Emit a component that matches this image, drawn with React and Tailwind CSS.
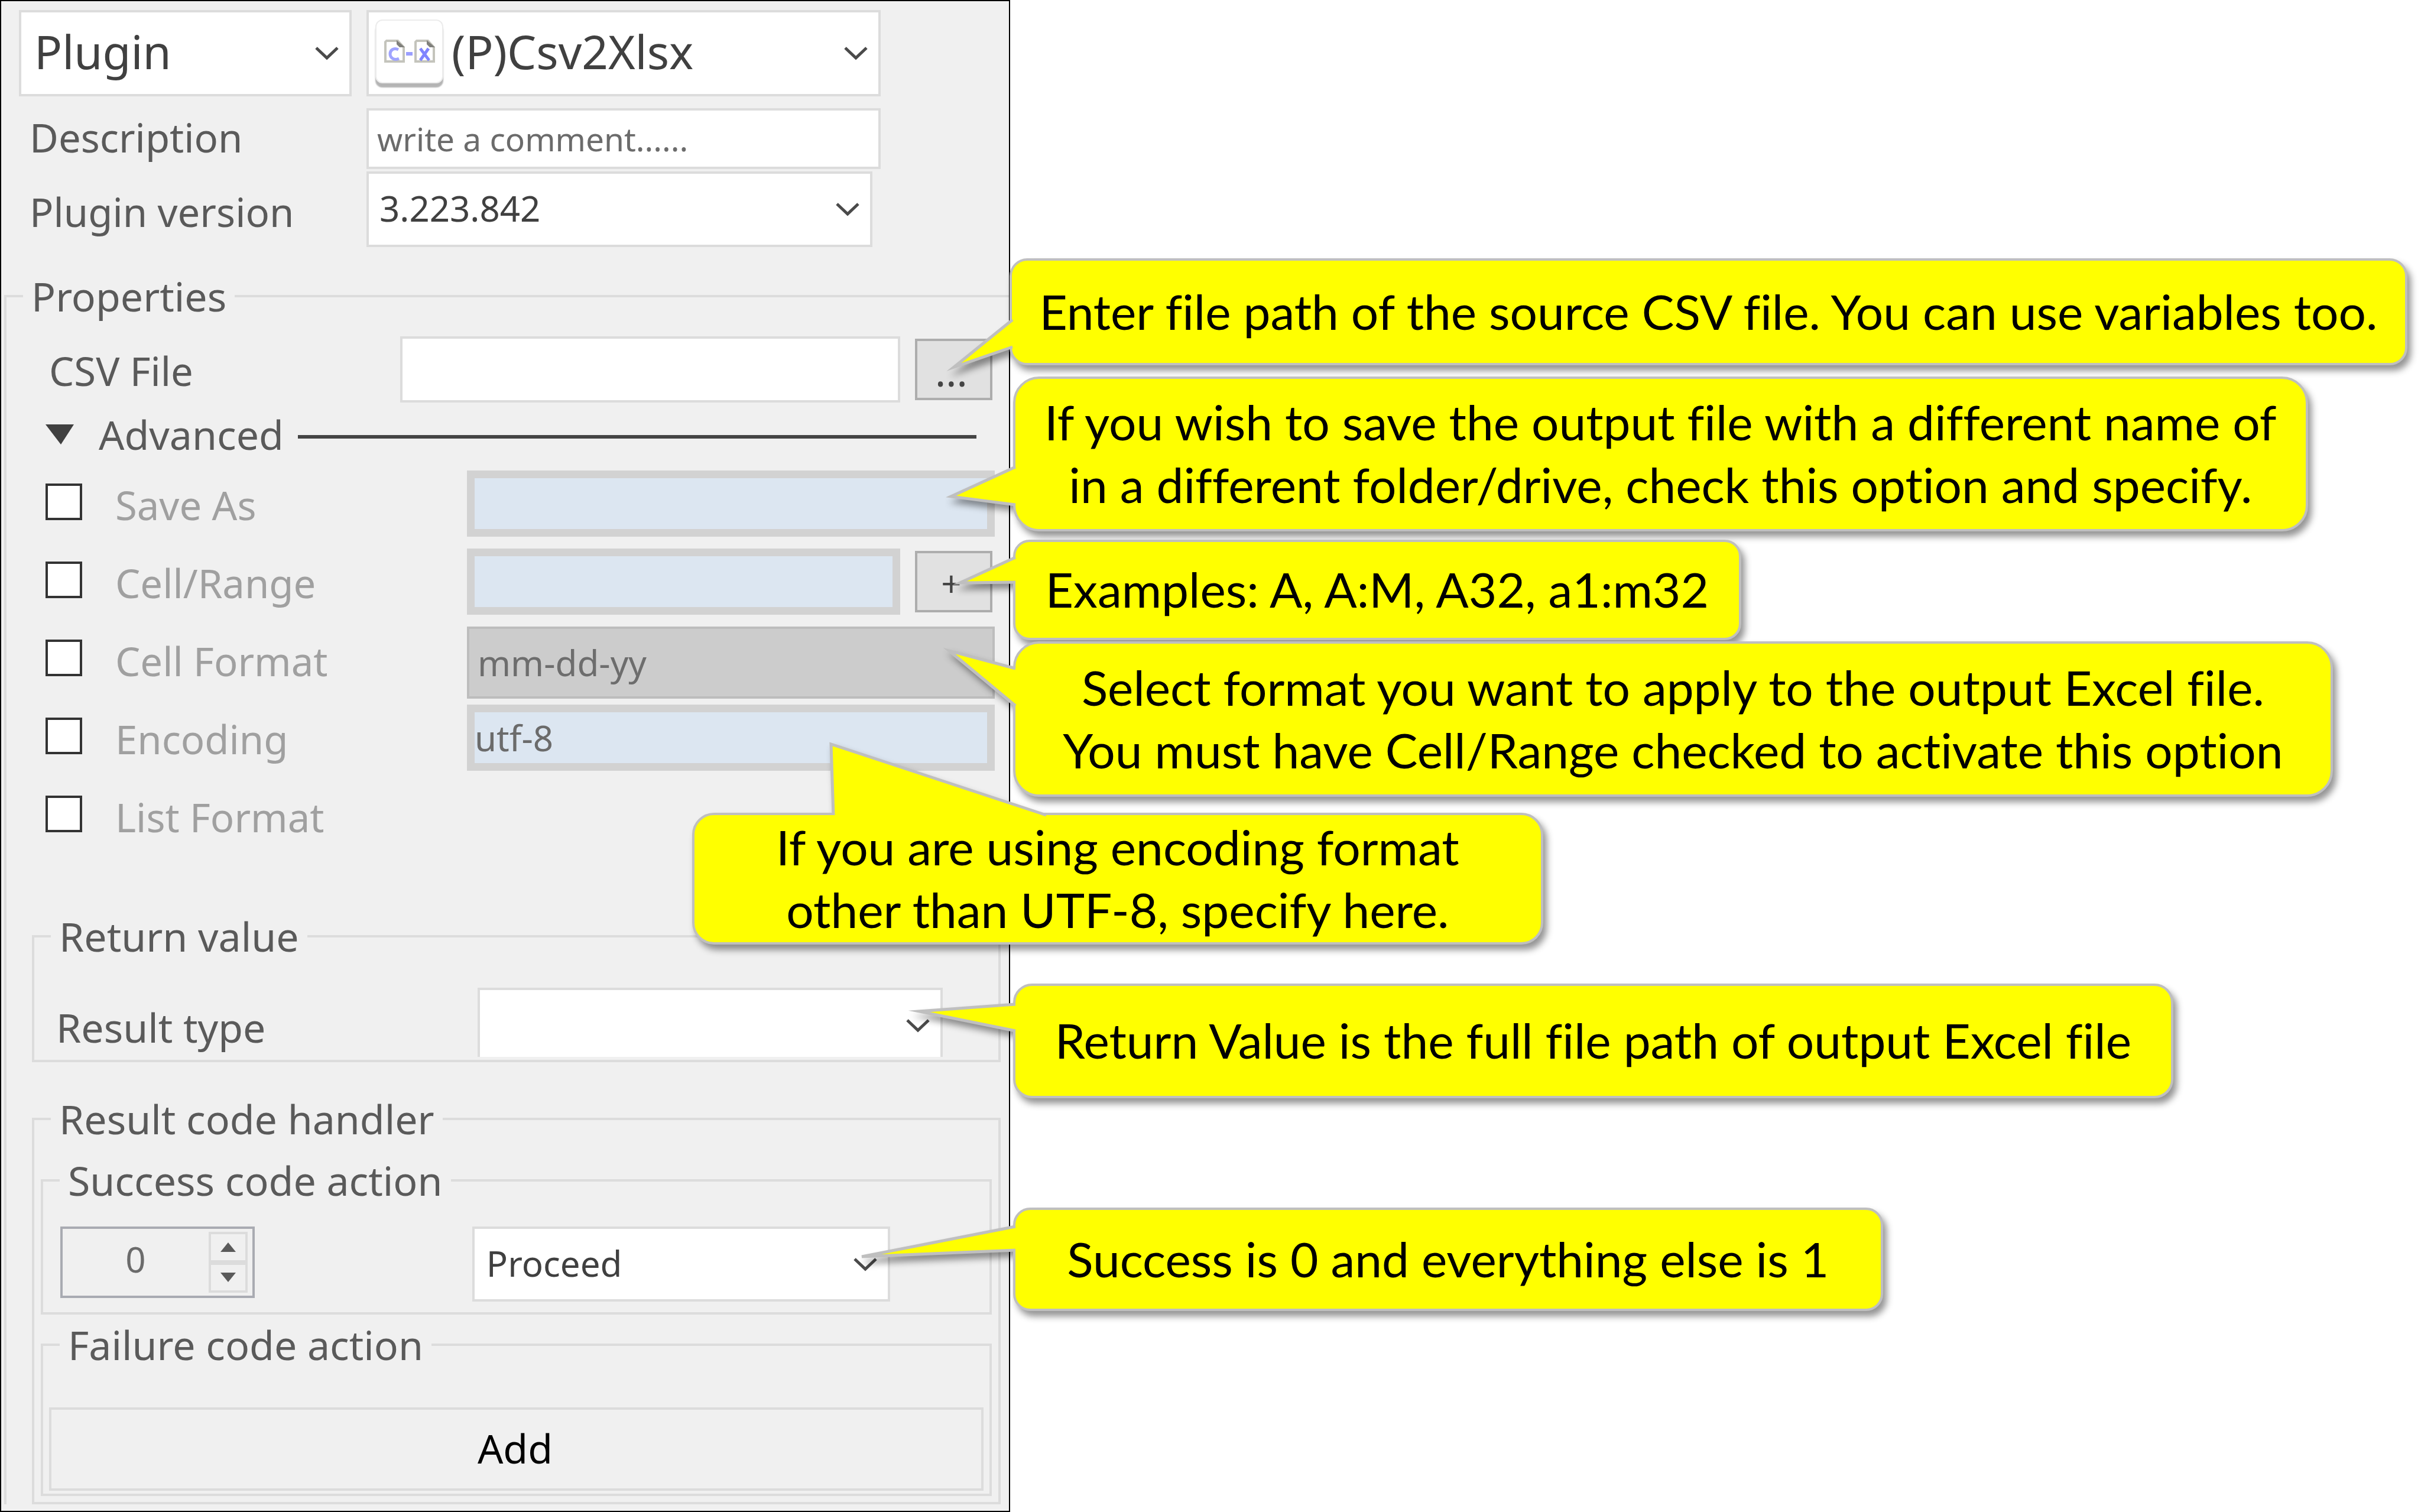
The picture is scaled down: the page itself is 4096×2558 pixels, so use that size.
const GRAY = "#bfbfbf";

function Chevron({ className = "" }) {
  return (
    <svg viewBox="0 0 40 24" className={`pointer-events-none absolute top-1/2 h-6 w-10 -translate-y-1/2 ${className}`} fill="none" stroke="#4a4a4a" strokeWidth="5">
      <path d="M2 3 L20 20 L38 3" />
    </svg>
  );
}

function Select({ id, label, value, className = "", textClass = "", chevron = "right-[22px]", children }) {
  return (
    <div className={`relative ${className}`}>
      {children}
      <select id={id} aria-label={label} defaultValue={value} className={`h-full w-full appearance-none border-4 border-[#dcdcdc] bg-white text-[#404040] outline-none ${textClass}`}>
        <option>{value}</option>
      </select>
      <Chevron className={chevron} />
    </div>
  );
}

function Group({ title, className = "", children }) {
  return (
    <fieldset className={`min-w-0 border-[#dcdcdc] ${className}`}>
      <legend className="ml-7 px-3.5 leading-20">{title}</legend>
      {children}
    </fieldset>
  );
}

function PluginIcon() {
  return (
    <span className="pointer-events-none absolute top-4 left-[15px] flex h-[108px] w-[115px] items-center justify-center rounded-xl border-2 border-[#ececec] bg-white shadow-[0_7px_2px_#b4b4b4]">
      <svg viewBox="0 0 88 40" className="h-10 w-[88px]" fill="none">
        <path d="M5 2 H24 L34 13 V37 H3 V4 Z" stroke="#c4c4bc" strokeWidth="4" />
        <path d="M22 1 L36 13 H27 L22 8 Z" fill="#80807c" />
        <path d="M56 2 H75 L85 13 V37 H54 V4 Z" stroke="#c4c4bc" strokeWidth="4" />
        <path d="M73 1 L87 13 H78 L73 8 Z" fill="#80807c" />
        <path d="M25 17 C17 13 11 18 11 24 C11 31 18 36 26 32" stroke="#a0a4ff" strokeWidth="5" />
        <path d="M38 24 H49" stroke="#9a9eff" strokeWidth="6" />
        <path d="M62 15 L77 35 M76 15 L62 35" stroke="#8085ff" strokeWidth="5" />
      </svg>
    </span>
  );
}

function OptionRow({ id, title, children }) {
  return (
    <div className="flex h-33 items-start pr-6 pl-[66px]">
      <label htmlFor={id} className="flex w-[713px] shrink-0 items-start gap-14 text-[67px] text-[#a0a0a0]">
        <input id={id} type="checkbox" className="mt-8 size-[62px] shrink-0 appearance-none border-4 border-[#333] bg-white" />
        <span className="pt-7 leading-20">{title}</span>
      </label>
      {children}
    </div>
  );
}

const shaded = "h-28 min-w-0 flex-1 border-[13px] border-[#d2d2d2] bg-[#dce6f1] text-[60px] text-[#6b6b6b] outline-none";
const smallButton = "shrink-0 border-4 border-[#adadad] bg-[#e1e1e1] h-[104px] w-[131px] pr-2 text-[#444]";

function Callout({ className, tail, box, points, children }) {
  return (
    <div className={`relative flex items-center justify-center border-4 border-[#bfbfbf] bg-[#ffff00] text-center drop-shadow-[6px_9px_6px_rgba(0,0,0,0.42)] ${className}`}>
      <svg viewBox={box} className={`absolute overflow-visible ${tail}`}>
        <polygon points={points} fill="#ffff00" />
        <polyline points={points} fill="none" stroke={GRAY} strokeWidth="5" strokeMiterlimit="10" />
      </svg>
      <p className="relative pb-1 whitespace-nowrap">{children}</p>
    </div>
  );
}

export default function App() {
  return (
    <main className="flex min-h-screen items-stretch overflow-hidden bg-white">
      <form className="w-[41.72%] shrink-0 border-2 border-black bg-[#f0f0f0] pt-[15px] pb-2 font-['Noto_Sans','Open_Sans',sans-serif] text-[68px] leading-20 text-[#5a5a5a]">
        <div className="pr-[217px] pl-[30px]">
          <div className="flex gap-[25px]">
            <Select label="Action type" value="Plugin" className="h-[146px] w-[563px]" textClass="pl-[22px] pb-1.5 text-[78px] leading-[120px]" />
            <Select label="Plugin" value="(P)Csv2Xlsx" className="h-[146px] flex-1" textClass="pl-[140px] pb-1.5 text-[78px] leading-[120px]">
              <PluginIcon />
            </Select>
          </div>
          <div className="mt-5 flex items-center">
            <label htmlFor="description" className="w-[588px] pb-1.5 pl-[18px] text-[67px] leading-20">Description</label>
            <input id="description" placeholder="write a comment......" className="h-[103px] min-w-0 flex-1 border-4 border-[#dcdcdc] bg-white pl-3.5 text-[55px] outline-none placeholder:text-[#6b6b6b]" />
          </div>
          <div className="mt-1 flex items-center pr-3.5">
            <label htmlFor="version" className="w-[588px] pt-2 pl-[18px] text-[67px] leading-20">Plugin version</label>
            <Select id="version" label="Plugin version" value="3.223.842" className="h-32 flex-1" textClass="pl-[18px] pb-1 text-[60px]" />
          </div>
        </div>

        <Group title="Properties" className="mt-[43px] ml-[5px] border-t-4 border-l-4">
          <div className="mt-7 flex items-center pr-7 pl-[72px]">
            <label htmlFor="csv" className="w-[594px] pt-1 text-[67px] leading-20">CSV File</label>
            <input id="csv" className="h-28 min-w-0 flex-1 border-4 border-[#dcdcdc] bg-white px-4 text-[60px] outline-none" />
            <button type="button" aria-label="Browse" className={`ml-[25px] pt-1.5 text-[68px] ${smallButton}`}>...</button>
          </div>

          <div className="mt-3.5 flex items-center pr-[55px] pl-[66px]">
            <svg viewBox="0 0 48 34" className="h-[34px] w-12" fill="#404040"><path d="M0 0 H48 L26 34 Z" /></svg>
            <span className="ml-[42px]">Advanced</span>
            <hr className="mt-2 ml-6 flex-1 border-t-6 border-[#444]" />
          </div>

          <div className="mt-[11px]">
            <OptionRow id="save-as" title="Save As">
              <input aria-label="Save As value" className={`mt-2.5 ${shaded}`} />
            </OptionRow>
            <OptionRow id="cell-range" title="Cell/Range">
              <input aria-label="Cell/Range value" className={`mt-2.5 ${shaded}`} />
              <button type="button" aria-label="Add range" className={`mt-3.5 mr-1 ml-[25px] pt-1.5 text-[60px] ${smallButton}`}>+</button>
            </OptionRow>
            <OptionRow id="cell-format" title="Cell Format">
              <select aria-label="Cell format value" className="mt-2.5 h-[122px] min-w-0 flex-1 appearance-none border-4 border-[#bdbdbd] bg-[#cccccc] pl-3.5 text-[60px] text-[#6d6d6d]">
                <option>mm-dd-yy</option>
              </select>
            </OptionRow>
            <OptionRow id="encoding" title="Encoding">
              <input aria-label="Encoding value" defaultValue="utf-8" className={`mt-2.5 ${shaded}`} />
            </OptionRow>
            <OptionRow id="list-format" title="List Format" />
          </div>

          <Group title="Return value" className="mt-[98px] mr-3.5 ml-[43px] border-4">
            <div className="mt-[47px] flex items-center pr-[94px] pb-[5px] pl-[37px]">
              <label htmlFor="result-type" className="w-[713px] pt-4">Result type</label>
              <div className="h-[117px] flex-1 overflow-hidden">
                <Select id="result-type" label="Result type" value="" className="h-32" textClass="text-[60px]" />
              </div>
            </div>
          </Group>

          <Group title="Result code handler" className="mt-14 mr-3.5 ml-[43px] border-4">
            <div className="px-[11px] pt-6 pb-2.5">
              <Group title="Success code action" className="border-4">
                <div className="mt-[38px] flex items-start justify-between pr-[168px] pb-[18px] pl-[29px]">
                  <div className="flex h-[121px] w-[329px] items-stretch border-4 border-[#a9abb2] py-[5px] pr-2">
                    <input aria-label="Success code" defaultValue="0" className="min-w-0 flex-1 pb-3 text-center text-[60px] text-[#6b6b6b] outline-none" />
                    <div className="flex w-[66px] flex-col">
                      <button type="button" aria-label="Increase" className="flex flex-1 items-center justify-center border-4 border-[#dcdcdc]">
                        <svg viewBox="0 0 26 16" className="h-4 w-[26px]" fill="#5a5a5a"><path d="M0 16 L13 0 L26 16 Z" /></svg>
                      </button>
                      <button type="button" aria-label="Decrease" className="flex flex-1 items-center justify-center border-4 border-[#dcdcdc]">
                        <svg viewBox="0 0 26 16" className="h-4 w-[26px]" fill="#5a5a5a"><path d="M0 0 L13 16 L26 0 Z" /></svg>
                      </button>
                    </div>
                  </div>
                  <Select label="Success action" value="Proceed" className="h-[127px] w-[707px]" textClass="pl-5 pb-1 text-[60px]" />
                </div>
              </Group>
              <Group title="Failure code action" className="mt-[11px] border-4">
                <div className="px-2.5 pt-[66px] pb-[5px]">
                  <button type="button" className="h-[141px] w-full border-4 border-[#dcdcdc] pr-1 pb-1 text-black">Add</button>
                </div>
              </Group>
            </div>
          </Group>
        </Group>
      </form>

      <aside className="relative flex flex-1 flex-col items-start pt-[437px] pl-[5px] font-[Lato,'Liberation_Sans',sans-serif] text-[82px] leading-[106px] text-black [font-variant-ligatures:none]">
        <Callout className="-ml-1.5 h-[181px] w-[2365px] rounded-[30px]" tail="top-[96px] -left-[108px] h-[94px] w-[112px]" box="0 0 112 94" points="109,4 10,84 109,50">
          Enter file path of the source CSV file. You can use variables too.
        </Callout>
        <Callout className="mt-[19px] h-[262px] w-[2191px] rounded-[44px]" tail="top-[149px] -left-[121px] h-16 w-[121px]" box="0 0 121 64" points="121,0 12,50 121,64">
          If you wish to save the output file with a different name of<br />in a different folder/drive, check this option and specify.
        </Callout>
        <Callout className="mt-3.5 h-[170px] w-[1232px] rounded-[28px]" tail="top-[26px] -left-[110px] h-11 w-[110px]" box="0 0 110 44" points="110,0 16,43 110,42">
          Examples: A, A:M, A32, a1:m32
        </Callout>
        <Callout className="mt-0.5 h-[263px] w-[2233px] rounded-[44px]" tail="top-[10px] -left-[123px] h-24 w-[123px]" box="0 0 123 96" points="123,32 11,2 123,95">
          Select format you want to apply to the output Excel file.<br />You must have Cell/Range checked to activate this option
        </Callout>
        <Callout className="mt-[27px] -ml-[543px] h-[223px] w-[1440px] rounded-[37px]" tail="-top-[122px] left-[230px] h-[122px] w-[366px]" box="0 0 366 122" points="5,122 1,2 365,122">
          If you are using encoding format<br />other than UTF-8, specify here.
        </Callout>
        <Callout className="mt-[66px] h-[194px] w-[1963px] rounded-[32px]" tail="top-[31px] -left-[177px] h-[46px] w-[177px]" box="0 0 177 46" points="177,0 14,12 177,45">
          Return Value is the full file path of output Excel file
        </Callout>
        <Callout className="mt-[185px] h-[175px] w-[1472px] rounded-[29px]" tail="top-7 -left-[274px] h-[52px] w-[274px]" box="0 0 274 52" points="274,0 14,51 274,40">
          Success is 0 and everything else is 1
        </Callout>
      </aside>
    </main>
  );
}
